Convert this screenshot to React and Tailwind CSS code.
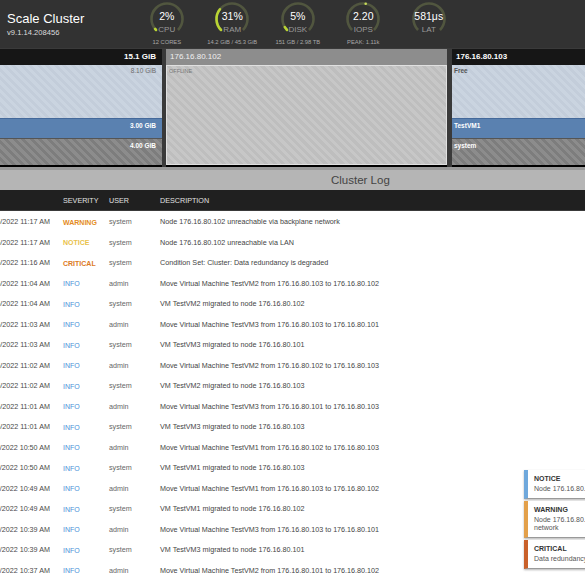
const ARC = "M7.04 28.96 A15.5 15.5 0 1 1 28.96 28.96";

const GAUGES = [
    { value: "2%", label: "CPU", sub: "12 CORES", pct: 2 },
    { value: "31%", label: "RAM", sub: "14.2 GiB / 45.3 GiB", pct: 31 },
    { value: "5%", label: "DISK", sub: "151 GB / 2.98 TB", pct: 5 },
    { value: "2.20", label: "IOPS", sub: "PEAK: 1.11k", pct: 0, peak: true },
    { value: "581μs", label: "LAT", sub: "", pct: 0 },
];

const LOGS = [
    ["1/25/2022 11:17 AM", "WARNING", "system", "Node 176.16.80.102 unreachable via backplane network"],
    ["1/25/2022 11:17 AM", "NOTICE", "system", "Node 176.16.80.102 unreachable via LAN"],
    ["1/25/2022 11:16 AM", "CRITICAL", "system", "Condition Set: Cluster: Data redundancy is degraded"],
    ["1/25/2022 11:04 AM", "INFO", "admin", "Move Virtual Machine TestVM2 from 176.16.80.103 to 176.16.80.102"],
    ["1/25/2022 11:04 AM", "INFO", "system", "VM TestVM2 migrated to node 176.16.80.102"],
    ["1/25/2022 11:03 AM", "INFO", "admin", "Move Virtual Machine TestVM3 from 176.16.80.103 to 176.16.80.101"],
    ["1/25/2022 11:03 AM", "INFO", "system", "VM TestVM3 migrated to node 176.16.80.101"],
    ["1/25/2022 11:02 AM", "INFO", "admin", "Move Virtual Machine TestVM2 from 176.16.80.102 to 176.16.80.103"],
    ["1/25/2022 11:02 AM", "INFO", "system", "VM TestVM2 migrated to node 176.16.80.103"],
    ["1/25/2022 11:01 AM", "INFO", "admin", "Move Virtual Machine TestVM3 from 176.16.80.101 to 176.16.80.103"],
    ["1/25/2022 11:01 AM", "INFO", "system", "VM TestVM3 migrated to node 176.16.80.103"],
    ["1/25/2022 10:50 AM", "INFO", "admin", "Move Virtual Machine TestVM1 from 176.16.80.102 to 176.16.80.103"],
    ["1/25/2022 10:50 AM", "INFO", "system", "VM TestVM1 migrated to node 176.16.80.103"],
    ["1/25/2022 10:49 AM", "INFO", "admin", "Move Virtual Machine TestVM1 from 176.16.80.103 to 176.16.80.102"],
    ["1/25/2022 10:49 AM", "INFO", "system", "VM TestVM1 migrated to node 176.16.80.102"],
    ["1/25/2022 10:39 AM", "INFO", "admin", "Move Virtual Machine TestVM3 from 176.16.80.103 to 176.16.80.101"],
    ["1/25/2022 10:39 AM", "INFO", "system", "VM TestVM3 migrated to node 176.16.80.101"],
    ["1/25/2022 10:37 AM", "INFO", "admin", "Move Virtual Machine TestVM2 from 176.16.80.101 to 176.16.80.102"],
];

const SEVERITY_CLASS = {
    WARNING: "text-[#e38b23] font-bold",
    NOTICE: "text-[#e9c24c] font-bold",
    CRITICAL: "text-[#dc7a24] font-bold",
    INFO: "text-[#4a8fd8]",
};

const TOASTS = [
    { title: "NOTICE", text: "Node 176.16.80.102 unreachable via LAN", border: "border-[#6fa8dc]" },
    { title: "WARNING", text: "Node 176.16.80.102 unreachable via backplane network", border: "border-[#e3a04a]" },
    { title: "CRITICAL", text: "Data redundancy is degraded", border: "border-[#c9602a]" },
];

function Gauge({ value, label, sub, pct, peak }) {
    return (
        <div className="w-[65.5px] shrink-0 flex flex-col items-center pt-[1px]">
            <div className="relative w-[36px] h-[36px]">
                <svg viewBox="0 0 36 36" className="w-full h-full">
                    <path d={ARC} fill="none" stroke="#51563f" strokeWidth="2.6" />
                    {pct > 0 && (
                        <path
                            d={ARC}
                            fill="none"
                            stroke="#b9d434"
                            strokeWidth="2.6"
                            strokeLinecap="round"
                            pathLength="100"
                            strokeDasharray={`${pct} 100`}
                        />
                    )}
                    {peak && <circle cx="20.7" cy="2.8" r="1.3" fill="#c8dc5a" />}
                </svg>
                <div className="absolute inset-0 flex flex-col items-center pt-[10px]">
                    <span className="text-[10.5px] leading-none text-white font-medium whitespace-nowrap">{value}</span>
                    <span className="text-[8px] leading-none text-[#9a9a9a] mt-[4px]">{label}</span>
                </div>
            </div>
            <div className="text-[5.8px] text-[#a8a8a8] mt-[3px] leading-none whitespace-nowrap">{sub}</div>
        </div>
    );
}

export default function App() {
    return (
        <div className="relative w-[585px] h-[585px] overflow-hidden bg-white font-['Liberation_Sans',Arial,sans-serif]">

            {/* Header */}
            <header className="h-[48px] bg-[#323232] flex">
                <div className="w-[134px] shrink-0 pl-[7px] pt-[12px]">
                    <div className="text-[13px] leading-none text-white">Scale Cluster</div>
                    <div className="text-[7.6px] leading-none text-[#ddd] mt-[4px]">v9.1.14.208456</div>
                </div>
                {GAUGES.map((g) => (
                    <Gauge key={g.label} {...g} />
                ))}
            </header>

            {/* Node strip */}
            <div className="h-[119px] bg-[#3a3a3a] flex gap-[4px] pt-[1px] overflow-hidden">
                <div className="w-[162px] shrink-0 flex flex-col border-b-2 border-black">
                    <div className="h-[16px] bg-[#161616] flex items-center justify-end pr-[6px] text-[8px] font-bold text-white">15.1 GiB</div>
                    <div className="h-[53px] bg-[repeating-linear-gradient(45deg,#cad4e0_0px,#cad4e0_3px,#c3cdda_3px,#c3cdda_6px)] text-right pr-[6px] pt-[3px] text-[6.5px] leading-none text-[#6b6b6b]">8.10 GiB</div>
                    <div className="h-[20px] bg-[#5a81b0] border-t border-[#44699a] text-right pr-[6px] pt-[4px] text-[6.5px] leading-none font-bold text-white">3.00 GiB</div>
                    <div className="flex-1 bg-[repeating-linear-gradient(45deg,#8c8c8c_0px,#8c8c8c_3px,#7d7d7d_3px,#7d7d7d_6px)] border-t border-[#555] text-right pr-[6px] pt-[4px] text-[6.5px] leading-none font-bold text-white">4.00 GiB</div>
                </div>
                <div className="w-[281px] shrink-0 flex flex-col border-b-2 border-black">
                    <div className="h-[16px] bg-[#8d8d8d] flex items-center pl-[4px] text-[8px] text-[#f0f0f0]">176.16.80.102</div>
                    <div className="flex-1 bg-[repeating-linear-gradient(45deg,#c7c7c7_0px,#c7c7c7_3px,#bebebe_3px,#bebebe_6px)] border border-[#e0e0e0] pl-[2px] pt-[3px] text-[5.5px] leading-none text-[#777]">OFFLINE</div>
                </div>
                <div className="w-[140px] shrink-0 ml-[1px] flex flex-col border-b-2 border-black">
                    <div className="h-[16px] bg-[#161616] flex items-center pl-[4px] text-[8px] font-bold text-white">176.16.80.103</div>
                    <div className="h-[53px] bg-[repeating-linear-gradient(45deg,#cad4e0_0px,#cad4e0_3px,#c3cdda_3px,#c3cdda_6px)] pl-[2px] pt-[3px] text-[6.5px] leading-none font-bold text-[#555]">Free</div>
                    <div className="h-[20px] bg-[#5a81b0] border-t border-[#44699a] pl-[2px] pt-[4px] text-[6.5px] leading-none font-bold text-white">TestVM1</div>
                    <div className="flex-1 bg-[repeating-linear-gradient(45deg,#8c8c8c_0px,#8c8c8c_3px,#7d7d7d_3px,#7d7d7d_6px)] border-t border-[#555] pl-[2px] pt-[4px] text-[6.5px] leading-none font-bold text-white">system</div>
                </div>
            </div>

            {/* Cluster log title */}
            <div className="h-[23px] bg-[#b5b5b5] border-t-[3px] border-[#9a9a9a] flex items-center pl-[331px] pt-[1px] text-[11.5px] text-[#444]">
                Cluster Log
            </div>

            {/* Table header */}
            <div className="h-[20.5px] bg-[#202020] border-b border-[#3a3a3a] flex items-center pt-[3px] text-[7.2px] text-[#e0e0e0]">
                <div className="w-[63px] shrink-0" />
                <div className="w-[46px] shrink-0">SEVERITY</div>
                <div className="w-[51px] shrink-0">USER</div>
                <div>DESCRIPTION</div>
            </div>

            {/* Rows */}
            <div className="flex flex-col pt-[2px]">
                {LOGS.map(([date, sev, user, desc], i) => (
                    <div key={i} className="h-[20.5px] shrink-0 flex items-center text-[7.2px] text-[#4a4a4a] whitespace-nowrap">
                        <div className="w-[50px] shrink-0 flex justify-end overflow-hidden">
                            <span className="shrink-0">{date}</span>
                        </div>
                        <div className="w-[13px] shrink-0" />
                        <div className={`w-[46px] shrink-0 text-[7px] ${SEVERITY_CLASS[sev]}`}>{sev}</div>
                        <div className="w-[51px] shrink-0 text-[#666]">{user}</div>
                        <div className="text-[#444]">{desc}</div>
                    </div>
                ))}
            </div>

            {/* Notifications */}
            <div className="absolute left-[524px] top-[470px] w-[170px] flex flex-col gap-[2px]">
                {TOASTS.map((t) => (
                    <div key={t.title} className={`bg-white border-l-4 ${t.border} border-b border-b-[#9a9a9a] shadow-[0_1px_2px_rgba(0,0,0,0.3)] px-[6px] pt-[4px] pb-[5px]`}>
                        <div className="text-[7px] font-bold text-[#333] leading-[10px]">{t.title}</div>
                        <div className="text-[7px] text-[#555] leading-[8px] mt-[1px]">{t.text}</div>
                    </div>
                ))}
            </div>
        </div>
    );
}
